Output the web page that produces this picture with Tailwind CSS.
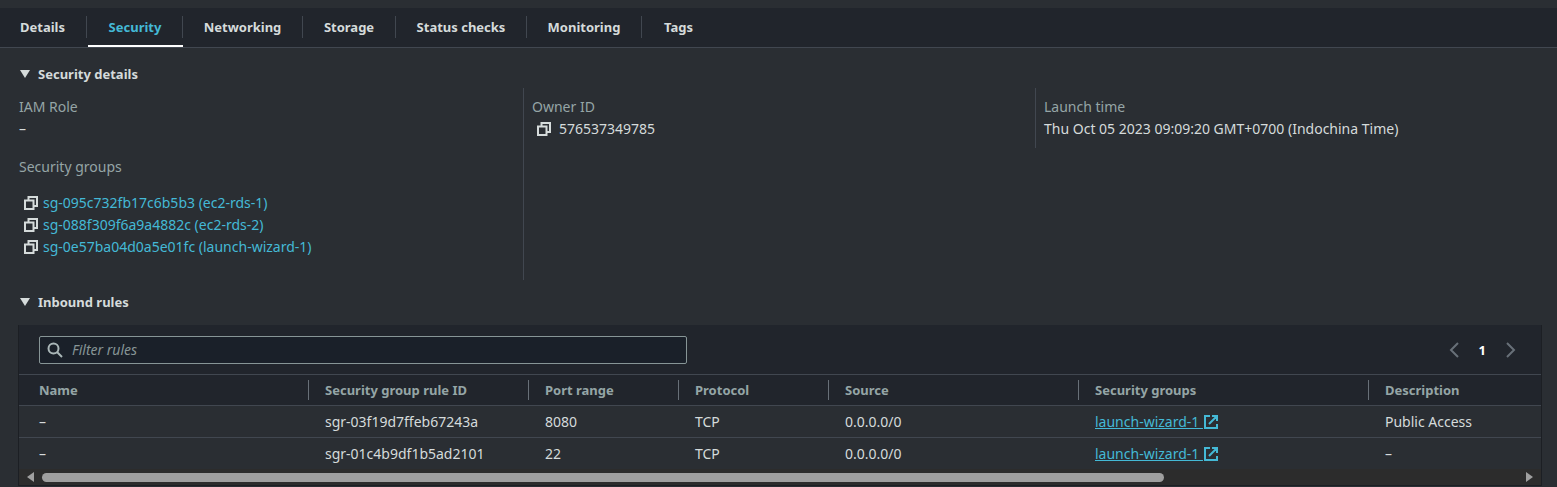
<!DOCTYPE html>
<html lang="en">
<head>
<meta charset="utf-8">
<meta name="viewport" content="width=device-width, initial-scale=1">
<title>Instance security</title>
<script src="https://cdn.jsdelivr.net/npm/@tailwindcss/browser@4"></script>
</head>
<body class="bg-[#2a2e33] pt-2 font-['Noto_Sans',sans-serif] text-[14px] leading-[22px] text-[#d5dbdb]">
<svg class="hidden" aria-hidden="true">
  <symbol id="copy" viewBox="0 0 14 14"><path d="M1 4.5h8.5V13H1zM4.5 4V1H13v9h-3" fill="none" stroke="currentColor" stroke-width="2"/></symbol>
  <symbol id="external" viewBox="0 0 14 14"><path d="M6 1H1v12h12V9M8 1h5v5M13 1L5 9" fill="none" stroke="currentColor" stroke-width="2"/></symbol>
  <symbol id="caret" viewBox="0 0 10 8"><path d="M0 0h10L5 8z" fill="currentColor"/></symbol>
</svg>

<nav class="flex h-10 border-b border-[#414750] bg-[#21252c] text-[13px] font-bold" aria-label="Instance sections">
  <button class="flex items-start w-[88px] pt-2"><span class="w-[87px] border-r border-[#414750] pl-5 text-left">Details</span></button>
  <button class="flex items-start w-[95px] border-b-2 border-white pt-2 text-[#44b9d6]"><span class="w-full border-r border-[#414750]">Security</span></button>
  <button class="flex items-start w-[120px] pt-2"><span class="w-full border-r border-[#414750]">Networking</span></button>
  <button class="flex items-start w-[93px] pt-2"><span class="w-full border-r border-[#414750]">Storage</span></button>
  <button class="flex items-start w-[131px] pt-2"><span class="w-full border-r border-[#414750]">Status checks</span></button>
  <button class="flex items-start w-[115px] pt-2"><span class="w-full border-r border-[#414750]">Monitoring</span></button>
  <button class="flex items-start w-[73px] pt-2"><span class="w-full">Tags</span></button>
</nav>

<main>
  <section>
    <h2><button class="mt-[15px] ml-5 flex items-center gap-2 text-[13px] font-bold"><svg class="h-2 w-[10px]"><use href="#caret"/></svg>Security details</button></h2>
    <div class="mt-[3px] grid grid-cols-3 items-start pr-[10px] pl-[11px]">
      <dl class="px-2 pt-2 pb-[22px]">
        <dt class="text-[#95a5a6]">IAM Role</dt>
        <dd>–</dd>
        <dt class="mt-4 text-[#95a5a6]">Security groups</dt>
        <dd class="mt-[14px] pl-[5px] text-[#44b9d6]">
          <ul>
            <li class="flex items-center gap-[5px]"><button class="text-[#d5dbdb]" aria-label="Copy"><svg class="size-[14px]"><use href="#copy"/></svg></button><a href="#">sg-095c732fb17c6b5b3 (ec2-rds-1)</a></li>
            <li class="flex items-center gap-[5px]"><button class="text-[#d5dbdb]" aria-label="Copy"><svg class="size-[14px]"><use href="#copy"/></svg></button><a href="#">sg-088f309f6a9a4882c (ec2-rds-2)</a></li>
            <li class="flex items-center gap-[5px]"><button class="text-[#d5dbdb]" aria-label="Copy"><svg class="size-[14px]"><use href="#copy"/></svg></button><a href="#">sg-0e57ba04d0a5e01fc (launch-wizard-1)</a></li>
          </ul>
        </dd>
      </dl>
      <dl class="self-stretch border-l border-[#414750] p-2">
        <dt class="text-[#95a5a6]">Owner ID</dt>
        <dd class="flex items-center gap-2 pl-[5px]"><button aria-label="Copy"><svg class="size-[14px]"><use href="#copy"/></svg></button>576537349785</dd>
      </dl>
      <dl class="border-l border-[#414750] p-2">
        <dt class="text-[#95a5a6]">Launch time</dt>
        <dd>Thu Oct 05 2023 09:09:20 GMT+0700 (Indochina Time)</dd>
      </dl>
    </div>
  </section>

  <section>
    <h2><button class="mt-[11px] ml-5 flex items-center gap-2 text-[13px] font-bold"><svg class="h-2 w-[10px]"><use href="#caret"/></svg>Inbound rules</button></h2>
    <div class="mt-3 mr-[15px] ml-[18px] border-x border-b border-[#1c1f24] bg-[#2a2e33]">
      <div class="flex items-center justify-between bg-[#21252c] pt-[11px] pr-[25px] pb-[10px] pl-5">
        <label class="flex h-7 w-[648px] items-center gap-[9px] rounded-[2px] border border-[#879596] bg-[#1a2029] px-[7px]">
          <svg class="size-4 text-[#aab7b8]" viewBox="0 0 16 16" fill="none" stroke="currentColor" stroke-width="2"><circle cx="6.5" cy="6.5" r="5"/><path d="M10 10l5 5"/></svg>
          <input type="text" aria-label="Filter rules" placeholder="Filter rules" class="min-w-0 flex-1 bg-transparent outline-none placeholder:text-[#879596] placeholder:italic">
        </label>
        <div class="flex items-center gap-5 text-[13px] font-bold text-white">
          <button aria-label="Previous page" class="text-[#687078]"><svg class="h-4 w-[10px]" viewBox="0 0 10 16" fill="none" stroke="currentColor" stroke-width="2"><path d="M9 1L2 8l7 7"/></svg></button>
          <button>1</button>
          <button aria-label="Next page" class="text-[#687078]"><svg class="h-4 w-[10px]" viewBox="0 0 10 16" fill="none" stroke="currentColor" stroke-width="2"><path d="M1 1l7 7-7 7"/></svg></button>
        </div>
      </div>
      <table class="w-full table-fixed border-separate border-spacing-0 text-left">
        <colgroup><col class="w-[290px]"><col class="w-[220px]"><col class="w-[150px]"><col class="w-[150px]"><col class="w-[250px]"><col class="w-[290px]"><col></colgroup>
        <thead class="bg-[#21252c] text-[13px] text-[#95a5a6]">
          <tr>
            <th class="border-y border-[#414750] py-[5px]"><div class="border-r border-[#687078] pl-5 leading-5">Name</div></th>
            <th class="border-y border-[#414750] py-[5px]"><div class="border-r border-[#687078] pl-4 leading-5">Security group rule ID</div></th>
            <th class="border-y border-[#414750] py-[5px]"><div class="border-r border-[#687078] pl-4 leading-5">Port range</div></th>
            <th class="border-y border-[#414750] py-[5px]"><div class="border-r border-[#687078] pl-4 leading-5">Protocol</div></th>
            <th class="border-y border-[#414750] py-[5px]"><div class="border-r border-[#687078] pl-4 leading-5">Source</div></th>
            <th class="border-y border-[#414750] py-[5px]"><div class="border-r border-[#687078] pl-4 leading-5">Security groups</div></th>
            <th class="border-y border-[#414750] py-[5px]"><div class="pl-4 leading-5">Description</div></th>
          </tr>
        </thead>
        <tbody>
          <tr class="h-8">
            <td class="border-b border-[#414750] pl-5">–</td>
            <td class="border-b border-[#414750] pl-4">sgr-03f19d7ffeb67243a</td>
            <td class="border-b border-[#414750] pl-4">8080</td>
            <td class="border-b border-[#414750] pl-4">TCP</td>
            <td class="border-b border-[#414750] pl-4">0.0.0.0/0</td>
            <td class="border-b border-[#414750] pl-4"><a href="#" class="flex items-center gap-px text-[#44b9d6] underline"><span class="whitespace-pre">launch-wizard-1 </span><svg class="size-[14px]"><use href="#external"/></svg></a></td>
            <td class="border-b border-[#414750] pl-4">Public Access</td>
          </tr>
          <tr class="h-[31px]">
            <td class="pl-5">–</td>
            <td class="pl-4">sgr-01c4b9df1b5ad2101</td>
            <td class="pl-4">22</td>
            <td class="pl-4">TCP</td>
            <td class="pl-4">0.0.0.0/0</td>
            <td class="pl-4"><a href="#" class="flex items-center gap-px text-[#44b9d6] underline"><span class="whitespace-pre">launch-wizard-1 </span><svg class="size-[14px]"><use href="#external"/></svg></a></td>
            <td class="pl-4">–</td>
          </tr>
        </tbody>
      </table>
      <div class="flex h-4 items-center gap-2 bg-[#2c2c2c] px-2 text-[#9f9f9f]">
        <svg class="h-[10px] w-[7px]" viewBox="0 0 7 10"><path d="M7 0v10L0 5z" fill="currentColor"/></svg>
        <div class="flex-1"><div class="h-[9px] w-[76%] rounded-full bg-[#9f9f9f]"></div></div>
        <svg class="h-[10px] w-[7px]" viewBox="0 0 7 10"><path d="M0 0v10l7-5z" fill="currentColor"/></svg>
      </div>
    </div>
  </section>
</main>
</body>
</html>
